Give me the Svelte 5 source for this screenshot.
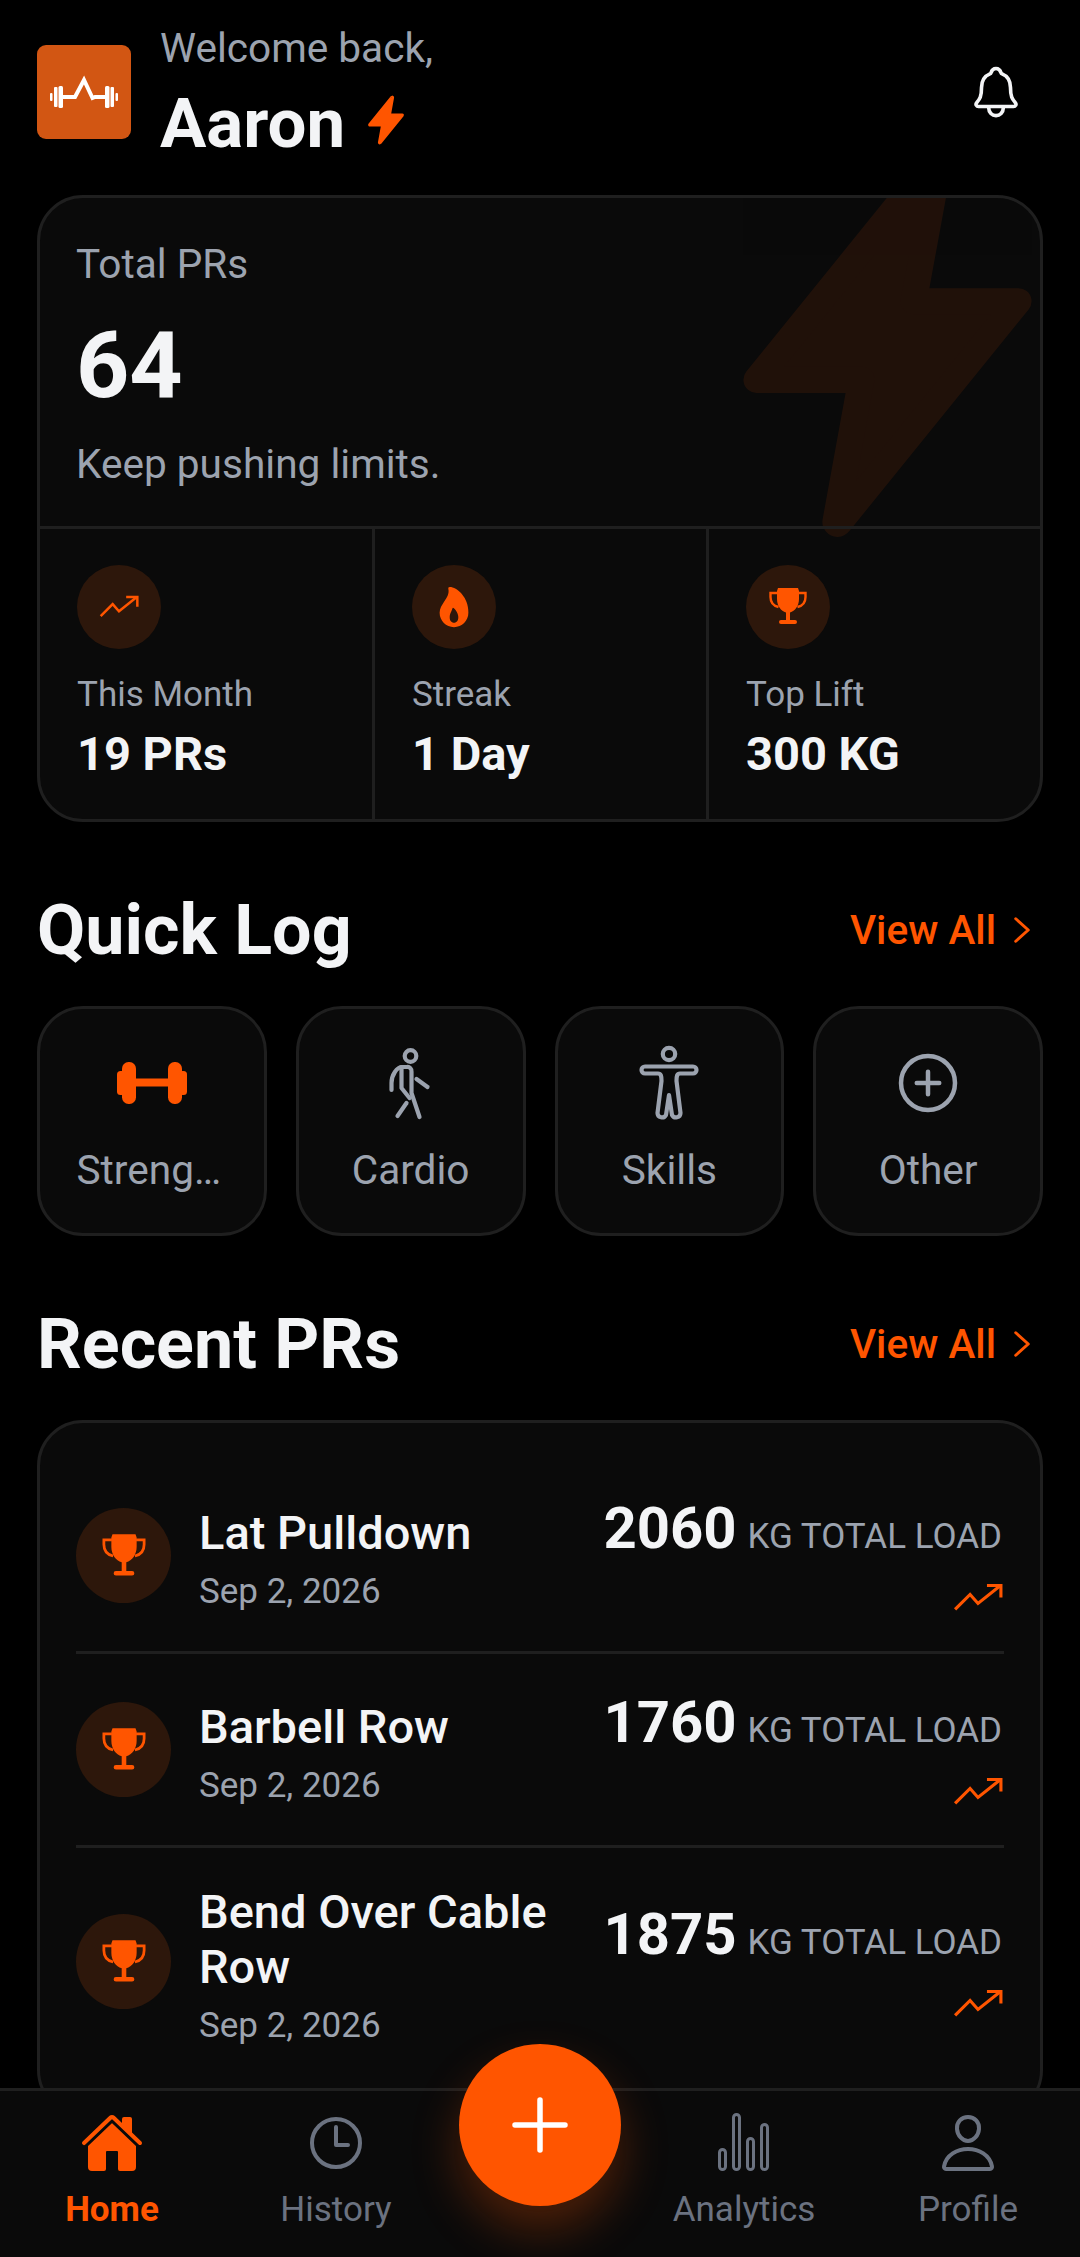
<script>
  const stats = [
    { icon: 'trend', label: 'This Month', value: '19 PRs' },
    { icon: 'flame', label: 'Streak', value: '1 Day' },
    { icon: 'trophy', label: 'Top Lift', value: '300 KG' }
  ];
  const prs = [
    { name: 'Lat Pulldown', date: 'Sep 2, 2026', load: '2060' },
    { name: 'Barbell Row', date: 'Sep 2, 2026', load: '1760' },
    { name: 'Bend Over Cable Row', date: 'Sep 2, 2026', load: '1875' }
  ];
  const flash = 'M315.27 33L96 304h128l-31.51 173.23a2.36 2.36 0 002.33 2.77h0a2.36 2.36 0 001.89-.95L416 208H288l31.66-173.25a2.45 2.45 0 00-2.44-2.75h0a2.42 2.42 0 00-1.95 1z';
</script>

{#snippet trend(cls)}
  <svg class={cls} viewBox="0 0 24 24" fill="none" stroke="currentColor" stroke-width="1.5"><path d="M1 17.500 L8.200 10.300 L12 14.600 L22.500 6.200" /><path d="M16.300 6 H23 V11.800" /></svg>
{/snippet}
{#snippet trophy(cls)}
  <svg class={cls} viewBox="0 0 40 40" fill="currentColor"><path d="M10 1h20l1 3v8c0 7-4 12-9 13.5V33h5a1.7 1.7 0 010 4H13a1.7 1.7 0 010-4h5V25.500C13 24 9 19 9 12V4z"/><path d="M9.500 6H2.500v4c0 6 3.500 9 8 10" fill="none" stroke="currentColor" stroke-width="2.400"/><path d="M30.500 6h7v4c0 6-3.500 9-8 10" fill="none" stroke="currentColor" stroke-width="2.400"/></svg>
{/snippet}
{#snippet flame(cls)}
  <svg class={cls} viewBox="0 0 512 512" fill="currentColor"><path d="M394.23 197.56a300.43 300.43 0 00-53.37-90C301.2 61.65 249.05 32 208 32a16 16 0 00-15.48 20c13.87 53-14.88 97.07-45.31 143.72C122 234.36 96 274.27 96 320c0 88.22 71.78 160 160 160s160-71.78 160-160c0-43.3-7.32-84.49-21.77-122.44zm-105.9 221.13C278 429.69 265.05 432 256 432s-22-2.31-32.33-13.31S208 390.24 208 368c0-25.14 8.82-44.28 17.34-62.78 4.95-10.74 10-21.67 13-33.37a8 8 0 0112.49-4.51A126.48 126.48 0 01275 292c18.17 24 29 52.42 29 76 0 22.18-5.3 39.53-15.67 50.69z"/></svg>
{/snippet}
{#snippet chevron()}
  <svg class="chev" viewBox="0 0 16 24" fill="none" stroke="currentColor" stroke-width="2.400" stroke-linecap="round" stroke-linejoin="round"><path d="M3 3 L13 12 L3 21"/></svg>
{/snippet}

<div class="screen">
  <main class="scroll">
    <header class="top">
      <div class="logo">
        <svg viewBox="0 0 94 94" width="94" height="94" fill="#fff">
          <rect x="13" y="48" width="2.500" height="8" rx="1"/><rect x="17" y="42" width="3.500" height="20" rx="1"/><rect x="21.500" y="41" width="4.500" height="22" rx="1.500"/>
          <rect x="68" y="41" width="4.500" height="22" rx="1.500"/><rect x="73.500" y="42" width="3.500" height="20" rx="1"/><rect x="78.500" y="48" width="2.500" height="8" rx="1"/>
          <path d="M25 52 H38 L47 35 L55.500 53 L58 52 H69" fill="none" stroke="#fff" stroke-width="4"/>
        </svg>
      </div>
      <div class="hello">
        <div class="welcome">Welcome back,</div>
        <div class="name-row"><span class="name">Aaron</span>
          <svg class="name-bolt" viewBox="0 0 512 512" fill="#ff5500" stroke="#ff5500" stroke-width="32" stroke-linejoin="round"><path d={flash}/></svg>
        </div>
      </div>
      <svg class="bell" viewBox="0 0 512 512" fill="none" stroke="#f3f4f6" stroke-width="32" stroke-linecap="round" stroke-linejoin="round"><path d="M427.68 351.43C402 320 383.87 304 383.87 217.35 383.87 138 343.35 109.73 310 96c-4.43-1.82-8.6-6-9.95-10.55C294.2 65.54 277.8 48 256 48s-38.19 17.55-44 37.47c-1.35 4.6-5.52 8.71-9.95 10.53-33.39 13.75-73.87 41.92-73.87 121.35C128.13 304 110 320 84.32 351.43 73.68 364.45 83 384 101.61 384h308.88c18.51 0 27.77-19.61 17.19-32.57zM320 384v16a64 64 0 01-128 0v-16"/></svg>
    </header>

    <section class="card hero">
      <svg class="hero-bolt" viewBox="0 0 512 512" fill="#ff5500" stroke="#ff5500" stroke-width="32" stroke-linejoin="round"><path d={flash}/></svg>
      <div class="hero-top">
        <div class="hero-label">Total PRs</div>
        <div class="hero-value">64</div>
        <div class="hero-sub">Keep pushing limits.</div>
      </div>
      <div class="stats">
        {#each stats as s}
          <div class="stat">
            <div class="stat-icon">
              {#if s.icon === 'trend'}{@render trend('i-trend')}{:else if s.icon === 'flame'}{@render flame('i-flame')}{:else}{@render trophy('i-trophy')}{/if}
            </div>
            <div class="stat-label">{s.label}</div>
            <div class="stat-value">{s.value}</div>
          </div>
        {/each}
      </div>
    </section>

    <div class="sec-head first">
      <h2>Quick Log</h2>
      <span class="view">View All {@render chevron()}</span>
    </div>
    <div class="tiles">
      <div class="tile">
        <div class="tile-icon">
          <svg class="i-barbell" viewBox="0 0 70 42" fill="#ff5500"><rect x="0" y="9" width="8" height="24" rx="3.500"/><rect x="5" y="0" width="14" height="42" rx="6.500"/><rect x="17" y="16.500" width="36" height="8"/><rect x="51" y="0" width="14" height="42" rx="6.500"/><rect x="62" y="9" width="8" height="24" rx="3.500"/></svg>
        </div>
        <div class="tile-label">Strength</div>
      </div>
      <div class="tile">
        <div class="tile-icon">
          <svg class="i-figure" viewBox="0 0 72 76" fill="none" stroke="#9ca3af" stroke-width="4.200" stroke-linecap="round" stroke-linejoin="round"><circle cx="35.500" cy="11" r="5.800"/><path d="M16.500 45V38C16.500 30 22 22 27 22H32a4 4 0 014.500 4.500V48L44.500 72"/><path d="M26.500 22V43L34.500 53"/><path d="M41.500 34L52.500 42"/><path d="M31.500 58L22.500 71"/></svg>
        </div>
        <div class="tile-label">Cardio</div>
      </div>
      <div class="tile">
        <div class="tile-icon">
          <svg class="i-figure" viewBox="0 0 72 76" fill="none" stroke="#9ca3af" stroke-width="4.200" stroke-linecap="round" stroke-linejoin="round"><circle cx="36" cy="9" r="6.200"/><path d="M12 21.500H60a3.500 3.500 0 010 7H47C44 28.500 43.500 31 43.500 36L47.500 68a4.500 4.500 0 01-8.500 2L36 50 33 70a4.500 4.500 0 01-8.500-2L28.500 36C28.500 31 28 28.500 25 28.500H12a3.500 3.500 0 010-7z"/></svg>
        </div>
        <div class="tile-label">Skills</div>
      </div>
      <div class="tile">
        <div class="tile-icon">
          <svg class="i-tile" viewBox="0 0 512 512" fill="none" stroke="#9ca3af" stroke-width="32" stroke-linecap="round"><path d="M448 256c0-106-86-192-192-192S64 150 64 256s86 192 192 192 192-86 192-192z"/><path d="M256 176v160M336 256H176"/></svg>
        </div>
        <div class="tile-label">Other</div>
      </div>
    </div>

    <div class="sec-head second">
      <h2>Recent PRs</h2>
      <span class="view">View All {@render chevron()}</span>
    </div>
    <section class="card list">
      {#each prs as p, i}
        <div class="row" class:sep={i < prs.length - 1}>
          <div class="row-icon">{@render trophy('i-trophy-lg')}</div>
          <div class="row-main">
            <div class="row-name">{p.name}</div>
            <div class="row-date">{p.date}</div>
          </div>
          <div class="row-side">
            <div class="load"><span class="load-num">{p.load}</span><span class="load-unit">KG TOTAL LOAD</span></div>
            {@render trend('i-trend-lg')}
          </div>
        </div>
      {/each}
    </section>
  </main>

  <nav class="nav">
    <div class="tab active">
      <svg class="i-nav" viewBox="0 0 512 512" fill="#ff5500"><path d="M261.56 101.28a8 8 0 00-11.06 0L66.4 277.15a8 8 0 00-2.47 5.79L63.9 448a32 32 0 0032 32H192a16 16 0 0016-16V328a8 8 0 018-8h80a8 8 0 018 8v136a16 16 0 0016 16h96.06a32 32 0 0032-32V282.94a8 8 0 00-2.47-5.79z"/><path d="M490.91 244.15l-74.8-71.56V64a16 16 0 00-16-16h-48a16 16 0 00-16 16v32l-57.92-55.38C272.77 35.14 264.71 32 256 32c-8.68 0-16.72 3.14-22.14 8.63l-212.7 203.5c-6.22 6-7 15.87-1.34 22.37A16 16 0 0043 267.56L250.5 69.28a8 8 0 0111.06 0l207.52 198.28a16 16 0 0022.59-.44c6.14-6.36 5.63-16.86-.76-22.97z"/></svg>
      <span>Home</span>
    </div>
    <div class="tab">
      <svg class="i-nav" viewBox="0 0 512 512" fill="none" stroke="#6b7280" stroke-width="32" stroke-linecap="round" stroke-linejoin="round"><path d="M256 64C150 64 64 150 64 256s86 192 192 192 192-86 192-192S362 64 256 64z"/><path d="M256 128v144h96"/></svg>
      <span>History</span>
    </div>
    <div class="tab-gap"></div>
    <div class="tab">
      <svg class="i-nav" viewBox="0 0 64 64" fill="none" stroke="#6b7280" stroke-width="3"><rect x="7.500" y="38.500" width="6" height="20" rx="3"/><rect x="21.500" y="3.500" width="6" height="55" rx="3"/><rect x="35.500" y="27.500" width="6" height="31" rx="3"/><rect x="49.500" y="13.500" width="6" height="45" rx="3"/></svg>
      <span>Analytics</span>
    </div>
    <div class="tab">
      <svg class="i-nav" viewBox="0 0 512 512" fill="none" stroke="#6b7280" stroke-width="32" stroke-linecap="round" stroke-linejoin="round"><path d="M344 144c-3.920 52.870-44 96-88 96s-84.150-43.220-88-96c-4-55 35-96 88-96s92 42 88 96z"/><path d="M256 304c-87 0-175.300 48-191.640 138.600C62.390 453.520 68.570 464 80 464h352c11.440 0 17.620-10.480 15.650-21.400C431.300 352 343 304 256 304z"/></svg>
      <span>Profile</span>
    </div>
    <button class="fab" aria-label="Add">
      <svg viewBox="0 0 56 56" width="56" height="56" stroke="#fff" stroke-width="5.500" stroke-linecap="round"><path d="M28 3v50M3 28h50"/></svg>
    </button>
  </nav>
</div>

<style>
  :global(body) { margin: 0; background: #000; }
  .screen {
    width: 1080px; height: 2257px; display: flex; flex-direction: column;
    overflow: hidden; background: #000; color: #f3f4f6;
    font-family: Roboto, "Liberation Sans", sans-serif; position: relative;
  }
  .scroll { flex: 1; min-height: 0; overflow: hidden; padding: 0 37px; }
  .top { height: 195px; display: flex; align-items: flex-start; }
  .logo { width: 94px; height: 94px; margin-top: 45px; background: #d25613; border-radius: 9px; flex: none; }
  .logo svg { display: block; }
  .hello { margin-left: 29px; flex: 1; padding-top: 23px; box-sizing: border-box; }
  .welcome { font-size: 40.6px; line-height: 50px; color: #9ca3af; }
  .name-row { display: flex; align-items: center; height: 76px; margin-top: 13px; }
  .name { font-size: 69px; line-height: 76px; font-weight: 700; color: #f3f4f6; }
  .name-bolt { width: 52px; height: 52px; margin-left: 15px; margin-bottom: 8px; }
  .bell { width: 58px; height: 58px; margin-top: 63px; margin-right: 18px; }

  .card { background: #0a0a0a; border: 3px solid #1f1f1f; border-radius: 46px; box-sizing: border-box; }
  .hero { height: 627px; position: relative; overflow: hidden; display: flex; flex-direction: column; }
  .hero-bolt { position: absolute; width: 419px; height: 419px; right: -57px; top: -67px; opacity: .09; }
  .hero-top { height: 331px; padding: 41px 36px 0; box-sizing: border-box; border-bottom: 3px solid #1f1f1f; position: relative; }
  .hero-label { font-size: 40.6px; line-height: 50px; color: #9ca3af; }
  .hero-value { font-size: 93px; line-height: 108px; font-weight: 700; margin-top: 23px; }
  .hero-sub { font-size: 40.6px; line-height: 50px; color: #9ca3af; margin-top: 19px; }
  .stats { flex: 1; display: grid; grid-template-columns: 332px 334px 1fr; position: relative; }
  .stat { padding: 36px 20px 0 37px; border-left: 3px solid #1f1f1f; }
  .stat:first-child { border-left: 0; }
  .stat-icon { width: 84px; height: 84px; border-radius: 50%; background: #2d170b; color: #ff5500; display: flex; align-items: center; justify-content: center; }
  .i-trend { width: 40px; height: 40px; }
  .i-flame { width: 46px; height: 46px; }
  .i-trophy { width: 40px; height: 40px; }
  .stat-label { font-size: 35px; line-height: 42px; color: #9ca3af; margin-top: 25px; }
  .stat-value { font-size: 47px; line-height: 56px; font-weight: 700; margin-top: 10px; }

  .sec-head { display: flex; align-items: center; justify-content: space-between; height: 80px; }
  .sec-head.first { margin-top: 68px; }
  .sec-head.second { margin-top: 68px; }
  h2 { margin: 0; font-size: 70px; line-height: 80px; font-weight: 700; color: #f3f4f6; }
  .view { display: flex; align-items: center; color: #ff5500; font-size: 40.6px; font-weight: 500; margin-right: 11px; }
  .chev { width: 20px; height: 30px; margin-left: 16px; }

  .tiles { display: grid; grid-template-columns: repeat(4, 1fr); gap: 29px; margin-top: 36px; }
  .tile { height: 230px; background: #0a0a0a; border: 3px solid #1f1f1f; border-radius: 46px; box-sizing: border-box; display: flex; flex-direction: column; align-items: center; padding: 33px 36.5px 0; min-width: 0; }
  .tile-icon { height: 82px; display: flex; align-items: center; justify-content: center; flex: none; }
  .i-barbell { width: 70px; height: 42px; flex: none; }
  .i-figure { width: 72px; height: 76px; flex: none; }
  .i-tile { width: 72px; height: 72px; flex: none; }
  .tile-label { width: 100%; text-align: center; font-size: 40.6px; line-height: 50px; color: #9ca3af; white-space: nowrap; overflow: hidden; text-overflow: ellipsis; margin-top: 21px; }

  .list { margin-top: 36px; padding: 37px 36px; }
  .row { display: flex; align-items: center; min-height: 194px; box-sizing: border-box; gap: 28px; }
  .row.sep { border-bottom: 3px solid #1f1f1f; }
  .row-icon { width: 95px; height: 95px; flex: none; border-radius: 50%; background: #2d170b; color: #ff5500; display: flex; align-items: center; justify-content: center; }
  .i-trophy-lg { width: 46px; height: 46px; }
  .row-main { flex: 1; min-width: 0; padding: 36px 0 28px; }
  .row-name { font-size: 47px; line-height: 55px; font-weight: 500; }
  .row-date { font-size: 35px; line-height: 44px; color: #9ca3af; margin-top: 9.5px; }
  .row-side { flex: none; display: flex; flex-direction: column; align-items: flex-end; margin-top: 10px; padding-right: 2px; }
  .load { display: flex; align-items: baseline; gap: 11px; height: 60px; white-space: nowrap; }
  .load-num { font-size: 58px; line-height: 60px; font-weight: 700; }
  .load-unit { font-size: 35px; line-height: 60px; color: #9ca3af; }
  .i-trend-lg { width: 50px; height: 50px; color: #ff5500; margin-top: 15px; margin-right: -1px; }

  .nav { height: 169px; flex: none; display: grid; grid-template-columns: 224px 224px 184px 224px 224px; background: #0a0a0a; border-top: 3px solid #1f1f1f; box-sizing: border-box; position: relative; }
  .tab { display: flex; flex-direction: column; align-items: center; color: #6b7280; font-size: 35px; padding-top: 20px; }
  .tab span { line-height: 40px; margin-top: 15px; }
  .tab.active { color: #ff5500; font-weight: 700; }
  .i-nav { width: 64px; height: 64px; display: block; }
  .fab { position: absolute; left: 459px; top: -47px; width: 162px; height: 162px; border-radius: 50%; border: 0; padding: 0; background: #ff5500; display: flex; align-items: center; justify-content: center; box-shadow: 0 24px 48px rgba(255, 85, 0, .28); }
</style>
